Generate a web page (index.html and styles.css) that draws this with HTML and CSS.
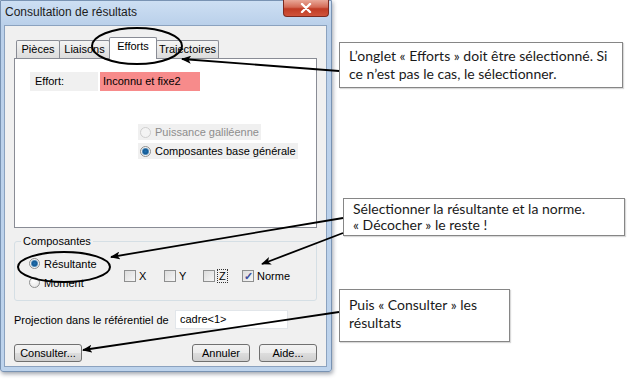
FILE: index.html
```html
<!DOCTYPE html>
<html>
    <head>
        <meta charset="utf-8">
        <link rel="stylesheet" href="styles.css">
    </head>
    <body>
        <div class="window">
            <div class="titlebar">
                <span class="title">Consultation de résultats</span>
                <span class="close">
                    <svg width="12" height="10" viewBox="0 0 12 10">
                        <path d="M2 1 L10 9 M10 1 L2 9" stroke="#fff" stroke-width="2.4" stroke-linecap="round"/>
                    </svg>
                </span>
            </div>
            <div class="client">
                <div class="tabs">
                    <div class="tab tab-pieces">Pièces</div>
                    <div class="tab tab-liaisons">Liaisons</div>
                    <div class="tab tab-efforts selected">Efforts</div>
                    <div class="tab tab-trajectoires">Trajectoires</div>
                </div>
                <div class="panel">
                    <div class="effort-row">
                        <span class="effort-label">Effort:</span>
                        <span class="effort-value">Inconnu et fixe2</span>
                    </div>
                    <div class="options">
                        <div class="option disabled"><span class="radio"></span>Puissance galiléenne</div>
                        <div class="option"><span class="radio checked"></span>Composantes base générale</div>
                    </div>
                </div>
                <fieldset class="group">
                    <legend>Composantes</legend>
                    <div class="group-body">
                        <div class="group-radios">
                            <div class="choice"><span class="radio checked"></span>Résultante</div>
                            <div class="choice"><span class="radio"></span>Moment</div>
                        </div>
                        <div class="group-checks">
                            <div class="check"><span class="box"></span>X</div>
                            <div class="check"><span class="box"></span>Y</div>
                            <div class="check"><span class="box"></span><span class="focus">Z</span></div>
                            <div class="check"><span class="box checked">&#10003;</span>Norme</div>
                        </div>
                    </div>
                </fieldset>
                <div class="projection">
                    <span class="projection-label">Projection dans le référentiel de</span>
                    <span class="projection-value">cadre&lt;1&gt;</span>
                </div>
                <div class="buttons">
                    <span class="button button-consult">Consulter...</span>
                    <span class="button button-cancel">Annuler</span>
                    <span class="button button-help">Aide...</span>
                </div>
            </div>
        </div>

        <div class="callout callout-tab">
            L’onglet « Efforts » doit être sélectionné. Si<br>
            ce n’est pas le cas, le sélectionner.
        </div>
        <div class="callout callout-choice">
            Sélectionner la résultante et la norme.<br>
            « Décocher » le reste !
        </div>
        <div class="callout callout-consult">
            Puis « Consulter » les<br>
            résultats
        </div>

        <svg class="annotations" width="630" height="379" viewBox="0 0 630 379">
            <defs>
                <marker id="head" markerWidth="10" markerHeight="8" refX="9" refY="4" orient="auto" markerUnits="userSpaceOnUse">
                    <path d="M0 0 L10 4 L0 8 L2.5 4 Z" fill="#000"/>
                </marker>
            </defs>
            <ellipse cx="137" cy="46" rx="45" ry="18" fill="none" stroke="#000" stroke-width="2"/>
            <ellipse cx="64" cy="267" rx="46" ry="15" fill="none" stroke="#000" stroke-width="2"/>
            <line x1="339" y1="71" x2="182" y2="59" stroke="#000" stroke-width="1.8" marker-end="url(#head)"/>
            <line x1="343" y1="218" x2="111" y2="257" stroke="#000" stroke-width="1.8" marker-end="url(#head)"/>
            <line x1="343" y1="233" x2="262" y2="264" stroke="#000" stroke-width="1.8" marker-end="url(#head)"/>
            <line x1="339" y1="312" x2="83" y2="350" stroke="#000" stroke-width="1.8" marker-end="url(#head)"/>
        </svg>
    </body>
</html>
```

FILE: styles.css
```css
body {
    margin: 0;
    width: 630px;
    height: 379px;
    position: relative;
    overflow: hidden;
    background-color: #fff;
    font-family: "Liberation Sans", Arial, sans-serif;
    font-size: 11px;
    color: #000;
}

/* dialog window */
.window {
    width: 332px;
    height: 372px;
    box-sizing: border-box;
    display: flex;
    flex-direction: column;
    border: 1px solid #7993b3;
    border-radius: 0 0 3px 3px;
    background: linear-gradient(#cddff3, #bad0ea 24px, #bdd3ec);
    box-shadow: 1px 2px 4px rgba(40, 50, 70, 0.45);
}
.titlebar {
    height: 24px;
    display: flex;
    align-items: flex-start;
    padding-left: 4px;
}
.title {
    font-size: 12px;
    line-height: 22px;
    color: #1c1c1c;
}
.close {
    margin: -1px 2px 0 auto;
    width: 46px;
    height: 17px;
    box-sizing: border-box;
    display: flex;
    align-items: center;
    justify-content: center;
    border: 1px solid #7c2a20;
    border-top: none;
    border-radius: 0 0 4px 4px;
    background: linear-gradient(#e9a898, #d46a55 45%, #c03b24 55%, #d0543b);
}
.client {
    flex: 1;
    margin: 0 4px 4px 3px;
    padding: 11px 9px 0 9px;
    border: 1px solid #8ba2bf;
    background-color: #f0f0f0;
}

/* tabs */
.tabs {
    height: 21px;
    display: flex;
    align-items: flex-end;
    padding-left: 2px;
}
.tab {
    height: 18px;
    box-sizing: border-box;
    border: 1px solid #898c95;
    border-bottom: none;
    border-radius: 2px 2px 0 0;
    background: linear-gradient(#f4f4f4, #e8e8e8 50%, #dcdcdc);
    text-align: center;
    line-height: 17px;
    margin-left: -1px;
}
.tab-pieces { width: 44px; margin-left: 0; }
.tab-liaisons { width: 51px; }
.tab-efforts { width: 48px; }
.tab-trajectoires { width: 63px; }
.tab.selected {
    height: 22px;
    margin-bottom: -1px;
    position: relative;
    z-index: 1;
    background: #fff;
    line-height: 16px;
}
.panel {
    height: 170px;
    box-sizing: border-box;
    border: 1px solid #898c95;
    background-color: #fff;
    padding: 13px 0 0 15px;
}
.effort-row {
    display: flex;
    height: 19px;
    line-height: 19px;
}
.effort-label {
    width: 68px;
    box-sizing: border-box;
    padding-left: 5px;
    background-color: #f0f0f0;
}
.effort-value {
    width: 100px;
    margin-left: 2px;
    box-sizing: border-box;
    padding-left: 3px;
    background-color: #f78b8b;
}
.options {
    display: flex;
    flex-direction: column;
    align-items: flex-start;
    gap: 3px;
    margin: 33px 0 0 108px;
}
.option {
    height: 16px;
    display: flex;
    align-items: center;
    padding: 0 2px;
    background-color: #f0f0f0;
}
.option.disabled {
    color: #8d8d8d;
}

/* radios and checkboxes */
.radio {
    width: 11px;
    height: 11px;
    box-sizing: border-box;
    border-radius: 50%;
    border: 1px solid #8e8f8f;
    background: radial-gradient(circle at 40% 35%, #fff, #e2e2e2);
    margin-right: 4px;
    flex: none;
}
.radio.checked {
    background: radial-gradient(circle, #1f6fb0 0, #155a93 2.5px, #8fb8d8 3.5px, #f2f2f2 4px);
}
.disabled .radio {
    border-color: #cfcfcf;
    background: #f4f4f4;
}
.box {
    width: 12px;
    height: 12px;
    box-sizing: border-box;
    border: 1px solid #8e8f8f;
    background: linear-gradient(135deg, #dcdcdc, #f6f6f6);
    margin-right: 3px;
    flex: none;
    font-size: 11px;
    line-height: 10px;
    text-align: center;
    color: #3d4f9e;
    font-weight: bold;
}

/* group box */
.group {
    margin: 7px 0 0 0;
    padding: 0 0 0 14px;
    border: 1px solid #d5dfe5;
    border-radius: 3px;
}
.group legend {
    margin-left: -8px;
    padding: 0 2px;
    line-height: 13px;
}
.group-body {
    display: flex;
    padding: 6px 0 8px 0;
}
.group-radios {
    width: 95px;
}
.choice {
    height: 19px;
    display: flex;
    align-items: center;
}
.group-checks {
    display: flex;
    height: 14px;
    margin-top: 15px;
}
.check {
    width: 39px;
    display: flex;
    align-items: center;
}
.check:first-child {
    width: 40px;
}
.focus {
    outline: 1px dotted #333;
    padding: 0 1px;
}

/* bottom rows */
.projection {
    display: flex;
    align-items: center;
    height: 19px;
    margin-top: 9px;
}
.projection-value {
    margin-left: auto;
    margin-right: 29px;
    width: 113px;
    height: 19px;
    box-sizing: border-box;
    border: 1px solid #e2e6ea;
    background-color: #fff;
    padding-left: 4px;
    line-height: 17px;
}
.buttons {
    display: flex;
    gap: 9px;
    margin-top: 15px;
}
.button {
    height: 18px;
    box-sizing: border-box;
    border: 1px solid #707070;
    border-radius: 3px;
    background: linear-gradient(#f3f3f3, #ebebeb 50%, #dddddd 51%, #cfcfcf);
    text-align: center;
    line-height: 16px;
}
.button-consult { width: 68px; margin-right: auto; }
.button-cancel { width: 58px; }
.button-help { width: 58px; }

/* annotations */
.callout {
    position: absolute;
    box-sizing: border-box;
    border: 1px solid #868686;
    background-color: #fff;
    font-family: Lato, "Liberation Sans", sans-serif;
    font-size: 14px;
    line-height: 18px;
    color: #1a1a1a;
    padding: 4px 0 0 9px;
    box-shadow: 1px 1px 1px rgba(0, 0, 0, 0.15);
}
.callout-tab {
    left: 339px;
    top: 42px;
    width: 284px;
    height: 46px;
}
.callout-choice {
    left: 343px;
    top: 198px;
    width: 282px;
    height: 38px;
    line-height: 16px;
    padding-top: 2px;
}
.callout-consult {
    left: 339px;
    top: 289px;
    width: 171px;
    height: 53px;
    padding-top: 6px;
}
.annotations {
    position: absolute;
    left: 0;
    top: 0;
    pointer-events: none;
}
```
